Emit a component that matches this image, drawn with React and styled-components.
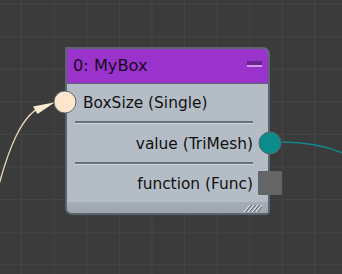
import React from "react";
import styled, { createGlobalStyle } from "styled-components";

const Global = createGlobalStyle`
  html, body { margin: 0; padding: 0; background: #3b3b3b; }
  * { box-sizing: border-box; }
`;

const Canvas = styled.div`
  position: relative;
  width: 342px;
  height: 274px;
  overflow: hidden;
  background-color: #3b3b3b;
  background-image:
    linear-gradient(to right, #454545 1px, transparent 1px),
    linear-gradient(to bottom, #454545 1px, transparent 1px);
  background-size: 32.6px 32.6px;
  background-position: 21px 3.5px;
  font-family: "DejaVu Sans", Verdana, sans-serif;
`;

const Wires = styled.svg`
  position: absolute;
  left: 0;
  top: 0;
  width: 342px;
  height: 274px;
`;

const Node = styled.div`
  position: absolute;
  left: 65px;
  top: 47px;
  width: 205px;
  height: 168px;
  display: flex;
  flex-direction: column;
  border: 2px solid #5b6570;
  border-radius: 0 7px 4px 7px;
  background: #b4bdc6;
`;

const Header = styled.div`
  height: 35px;
  display: flex;
  align-items: center;
  justify-content: space-between;
  padding: 0 6px 0 6px;
  background: #9a32cc;
  border-bottom: 1px solid #5b6570;
  border-radius: 0 5px 0 0;
`;

const Title = styled.span`
  font-size: 16.2px;
  color: #160a1c;
`;

const Minimize = styled.div`
  width: 15px;
  height: 6px;
  margin-top: -3px;
  background: #6a2390;
  border-bottom: 2px solid #d49af0;
`;

const Row = styled.div`
  position: relative;
  height: 38px;
  display: flex;
  align-items: center;
  justify-content: ${(p) => (p.$out ? "flex-end" : "flex-start")};
  padding: ${(p) => (p.$out ? "2px 15px 0 0" : "2px 0 0 16px")};
  font-size: 15.4px;
  color: #111;
`;

const Separator = styled.div`
  height: 3px;
  margin: 0 15px 0 8px;
  border-top: 2px solid #66717c;
  border-bottom: 1px solid #cfd6dc;
`;

const Footer = styled.div`
  margin-top: auto;
  height: 11px;
  display: flex;
  justify-content: flex-end;
  align-items: center;
  padding-right: 6px;
  background: linear-gradient(to bottom, #a5aeb7, #9da6af);
  border-radius: 0 0 2px 5px;
`;

const Pin = styled.div`
  position: absolute;
  top: 50%;
  width: ${(p) => (p.$square ? "24px" : "23px")};
  height: ${(p) => (p.$square ? "24px" : "23px")};
  transform: translate(${(p) => (p.$side === "left" ? "-50%" : "50%")}, -50%);
  ${(p) => (p.$side === "left" ? "left: -2px;" : "right: -2px;")}
  border: 1.5px solid #5b6570;
  border-radius: ${(p) => (p.$square ? "1px" : "50%")};
  background: ${(p) => p.$color};
`;

function Grip() {
  return (
    <svg width="20" height="8" viewBox="0 0 20 8">
      {[0, 4, 8, 12].map((x, i) => (
        <g key={i}>
          <line x1={x + 2} y1="8" x2={x + 8} y2="1" stroke="#eef1f4" strokeWidth="1" />
          <line x1={x + 3.5} y1="8" x2={x + 9.5} y2="1" stroke="#5b6570" strokeWidth="1" />
        </g>
      ))}
    </svg>
  );
}

export default function App() {
  return (
    <>
      <Global />
      <Canvas>
        <Wires viewBox="0 0 342 274">
          <path d="M -3 192 C 8 150, 22 112, 44 106" fill="none" stroke="#e6d6b8" strokeWidth="1.3" />
          <polygon points="33,106.5 55,102.3 37.5,114" fill="#fbe9d0" />
          <path d="M 282 142 C 305 142, 325 145, 345 154" fill="none" stroke="#12898a" strokeWidth="1.5" />
        </Wires>
        <Node>
          <Header>
            <Title>0: MyBox</Title>
            <Minimize />
          </Header>
          <Row>
            <Pin $side="left" $color="#fde6cc" />
            BoxSize (Single)
          </Row>
          <Separator />
          <Row $out>
            value (TriMesh)
            <Pin $side="right" $color="#0b8c8c" />
          </Row>
          <Separator />
          <Row $out>
            function (Func)
            <Pin $side="right" $square $color="#666666" />
          </Row>
          <Footer>
            <Grip />
          </Footer>
        </Node>
      </Canvas>
    </>
  );
}
